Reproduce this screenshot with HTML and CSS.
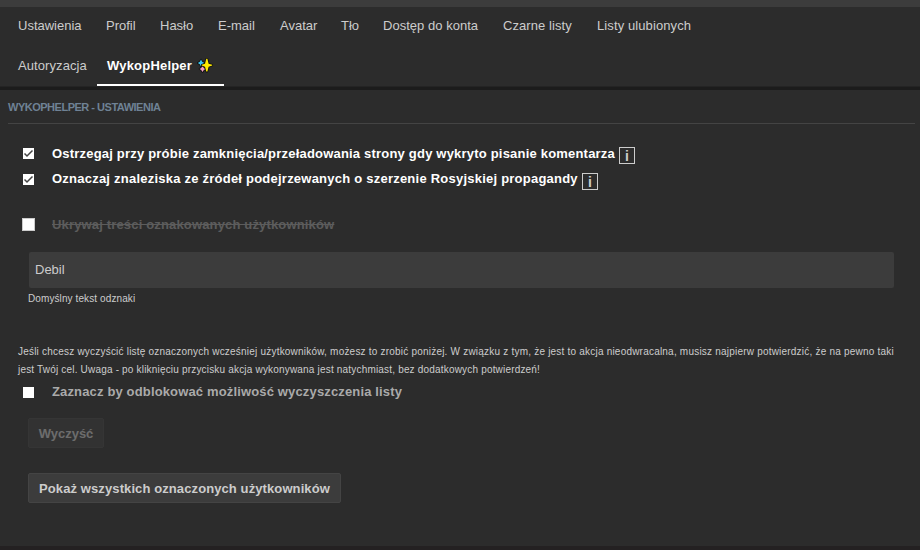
FILE: index.html
```html
<!DOCTYPE html>
<html lang="pl">
<head>
<meta charset="utf-8">
<title>WykopHelper - ustawienia</title>
<link rel="stylesheet" href="styles.css">
</head>
<body>
<div class="topbar"></div>
<nav class="tabs">
  <div class="tab-row">
    <a class="t1">Ustawienia</a><a class="t2">Profil</a><a class="t3">Hasło</a><a class="t4">E-mail</a><a class="t5">Avatar</a><a class="t6">Tło</a><a class="t7">Dostęp do konta</a><a class="t8">Czarne listy</a><a class="t9">Listy ulubionych</a>
  </div>
  <div class="tab-row">
    <a class="t10">Autoryzacja</a><a class="active">WykopHelper <svg class="sparkles" viewBox="0 0 16 16" width="16" height="16"><g stroke="#111" stroke-width="1.6" stroke-linejoin="round" paint-order="stroke"><path fill="#3cc8f4" d="M4 1.5 L5.2 3.8 L7.5 5 L5.2 6.2 L4 8.5 L2.8 6.2 L.8 5 L2.8 3.8Z"/><path fill="#f49ac1" d="M5.5 8 L6.8 10 L8.5 11 L6.8 12 L5.5 14 L4.2 12 L2.5 11 L4.2 10Z"/><path fill="#ffeb00" d="M9.3 .8 L10.4 .8 L11.6 5.8 L15.2 6.8 L15.2 7.6 L11.6 8.8 L10.4 13.6 L9.3 13.6 L8 8.8 L4.8 7.6 L4.8 6.8 L8 5.8Z"/></g></svg></a>
  </div>
</nav>
<main>
  <h4><span>WYKOPHELPER - USTAWIENIA</span></h4>
  <label class="option first"><span class="box"><svg viewBox="0 0 11 11"><path d="M1.5 5.5 L4 8 L9.5 2.5"/></svg></span><span class="label-a">Ostrzegaj przy próbie zamknięcia/przeładowania strony gdy wykryto pisanie komentarza</span><span class="info">i</span></label>
  <label class="option second"><span class="box"><svg viewBox="0 0 11 11"><path d="M1.5 5.5 L4 8 L9.5 2.5"/></svg></span><span class="label-b">Oznaczaj znaleziska ze źródeł podejrzewanych o szerzenie Rosyjskiej propagandy</span><span class="info">i</span></label>
  <label class="option disabled"><span class="box large"></span><span class="label-c">Ukrywaj treści oznakowanych użytkowników</span></label>
  <div class="field">Debil</div>
  <small>Domyślny tekst odznaki</small>
  <p><span class="line-a">Jeśli chcesz wyczyścić listę oznaczonych wcześniej użytkowników, możesz to zrobić poniżej. W związku z tym, że jest to akcja nieodwracalna, musisz najpierw potwierdzić, że na pewno taki</span><br><span class="line-b">jest Twój cel. Uwaga - po kliknięciu przycisku akcja wykonywana jest natychmiast, bez dodatkowych potwierdzeń!</span></p>
  <label class="option unlock"><span class="box"></span><span class="label-d">Zaznacz by odblokować możliwość wyczyszczenia listy</span></label>
  <button class="clear" disabled>Wyczyść</button>
  <button class="show">Pokaż wszystkich oznaczonych użytkowników</button>
</main>
<div class="bottom"></div>
</body>
</html>
```
FILE: styles.css
```css
* { box-sizing: border-box; }
body {
  margin: 0;
  height: 550px;
  overflow: hidden;
  display: flex;
  flex-direction: column;
  background: #2c2c2c;
  color: #ccc;
  font: 13px/18px "Liberation Sans", Arial, sans-serif;
}
.topbar { height: 7px; background: #3c3c3c; flex: none; }
.tabs { height: 83px; flex: none; padding-left: 8px; border-bottom: 3px solid #1c1c1c; box-shadow: inset 0 -1px #242424; }
.tab-row { display: flex; height: 40px; gap: 5px; }
.tab-row a { padding: 10px 10px 0; height: 39px; white-space: nowrap; }
.t1 { width: 83px; } .t2 { width: 49px; } .t3 { width: 53px; }
.t4 { width: 57px; } .t5 { width: 56px; } .t6 { width: 37px; }
.t7 { width: 115px; letter-spacing: .03px; } .t8 { width: 89px; letter-spacing: .08px; } .t9 { width: 115px; letter-spacing: .1px; }
.tab-row .t10 { width: 84px; letter-spacing: .08px; }
.tab-row .active { width: 127px; color: #fff; font-weight: bold; border-bottom: 2px solid #fff; letter-spacing: .2px; }
.sparkles { vertical-align: -4px; margin-left: 1px; }
main { display: flex; flex-direction: column; align-items: flex-start; padding: 0 5px 0 8px; }
h4 { width: 907px; height: 34px; margin: 0; padding-top: 8px; border-bottom: 1px solid #444; color: #6f8295; font-size: 11px; line-height: 18px; letter-spacing: -.49px; }
.option { display: flex; align-items: flex-start; height: 18px; margin-left: 14px; color: #fff; font-weight: bold; white-space: nowrap; }
.box { width: 11px; height: 11px; margin: 4px 18px 0 1px; background: #fff; flex: none; }
.box svg { display: block; fill: none; stroke: #444; stroke-width: 1.5; }
.large { width: 13px; height: 13px; margin: 2px 17px 0 0; border: 1px solid #ccc; }
.first { margin-top: 21px; }
.first .box { margin-top: 3px; }
.second { margin-top: 7px; }
.disabled { margin-top: 28px; color: #5c5c5c; text-decoration: line-through; }
.label-a { letter-spacing: .2px; }
.label-b { letter-spacing: .23px; }
.label-c { letter-spacing: .16px; }
.label-d { letter-spacing: .15px; }
.info { width: 16px; height: 17px; border: 1px solid #ccc; color: #ccc; margin: 3px 0 0 4px; line-height: 16px; text-align: center; font-size: 14px; }
.first .info { margin-top: 2px; }
.field { width: 865px; height: 36px; margin: 18px 0 0 21px; padding: 9px 6px; background: #3c3c3c; border-radius: 2px; }
small { margin: 2px 0 0 20px; font-size: 10px; letter-spacing: .1px; }
p { margin: 35px 0 0 10px; font-size: 10px; white-space: nowrap; }
.line-a { letter-spacing: .21px; }
.line-b { letter-spacing: .185px; }
.unlock { margin-top: 4px; color: #aaa; }
button { height: 30px; padding: 0; border: 1px solid #444; border-radius: 2px; background: #3c3c3c; color: #ccc; font: bold 13px "Liberation Sans", Arial, sans-serif; margin-left: 20px; white-space: nowrap; }
.clear { width: 76px; margin-top: 17px; opacity: .4; }
.show { width: 313px; margin-top: 25px; letter-spacing: .1px; }
.bottom { height: 4px; margin-top: auto; background: #242122; }
```
